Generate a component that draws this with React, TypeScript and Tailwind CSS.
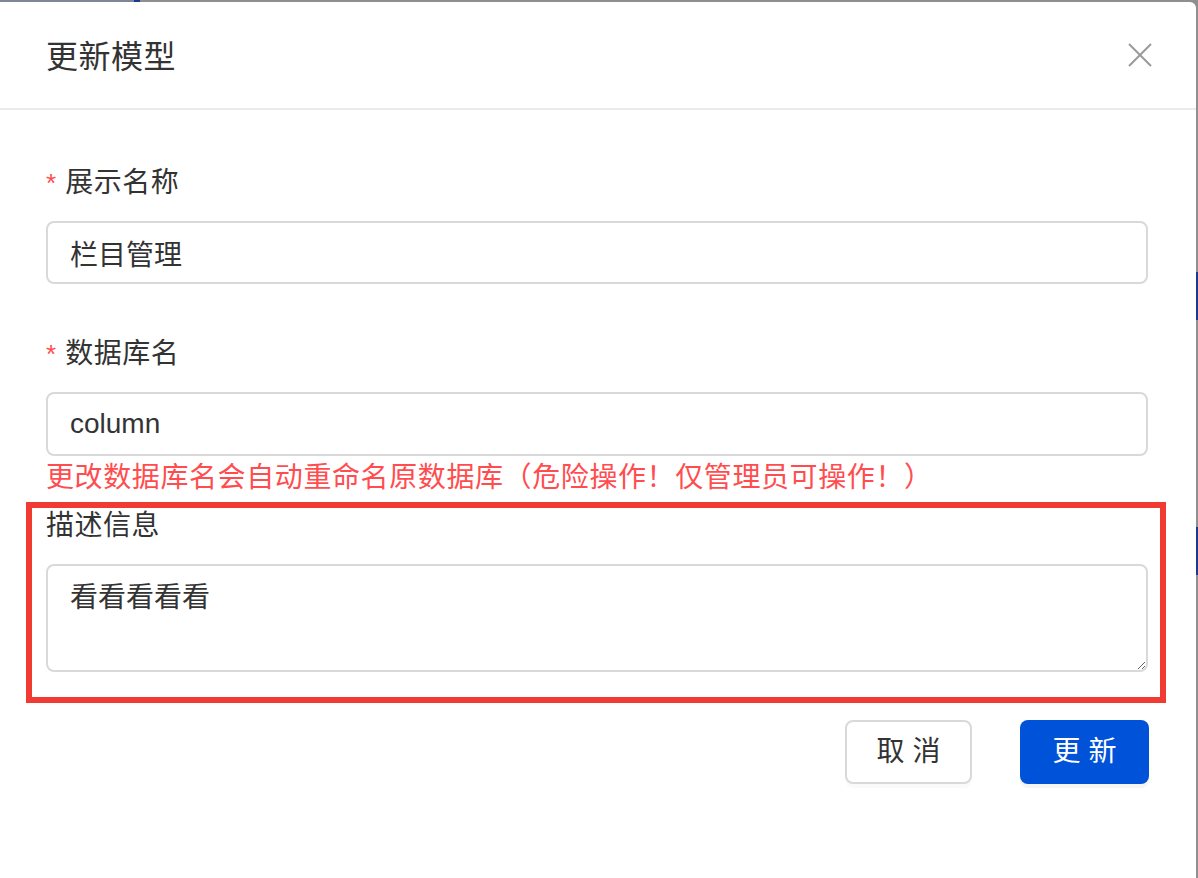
import { useState } from "react";

const font = {
  fontFamily: '"Liberation Sans", "Noto Sans CJK SC", sans-serif',
};

function Label({ text, required }: { text: string; required?: boolean }) {
  return (
    <div className="flex items-center h-[44px] mb-[16px] text-[28px] text-[#333]">
      {required && (
        <span className="text-[#ff4d4f] text-[26px] mr-[9px] leading-none">*</span>
      )}
      <span className="tracking-[0.5px]">{text}</span>
    </div>
  );
}

export default function App() {
  const [name, setName] = useState("栏目管理");
  const [table, setTable] = useState("column");
  const [desc, setDesc] = useState("看看看看看");

  return (
    <div
      className="w-[1198px] h-[878px] bg-[#8c8c8c] flex flex-col overflow-hidden"
      style={font}
    >
      {/* backdrop strip above the dialog */}
      <div className="flex h-[2px] shrink-0">
        <div className="w-[134px] bg-[#7d8797]" />
        <div className="w-[6px] bg-[#1b3a8c]" />
        <div className="flex-1 bg-[#8f8f8f]" />
      </div>

      <div className="flex flex-1 min-h-0">
        <div className="relative w-[1196px] bg-white rounded-tr-[6px] flex flex-col">
          {/* header */}
          <div className="h-[108px] shrink-0 flex items-center justify-between pl-[46px] pr-[44px] border-b-2 border-[#ebebeb]">
            <div className="text-[32px] text-[#333] leading-[44px] mt-[3px] tracking-[0.5px]">更新模型</div>
            <button className="w-[24px] h-[24px] text-[#999]">
              <svg viewBox="0 0 24 24" width="24" height="24" fill="none" stroke="currentColor" strokeWidth="2">
                <line x1="1" y1="1" x2="23" y2="23" />
                <line x1="23" y1="1" x2="1" y2="23" />
              </svg>
            </button>
          </div>

          {/* body */}
          <div className="pt-[51px] px-[46px] pr-[48px] flex flex-col">
            <Label text="展示名称" required />
            <input
              value={name}
              onChange={(e) => setName(e.target.value)}
              className="h-[63px] border-2 border-[#d9d9d9] rounded-[8px] px-[22px] text-[28px] text-[#333] outline-none"
            />

            <div className="h-[48px]" />
            <Label text="数据库名" required />
            <input
              value={table}
              onChange={(e) => setTable(e.target.value)}
              className="h-[64px] border-2 border-[#d9d9d9] rounded-[8px] px-[22px] text-[28px] text-[#333] outline-none"
            />
            <div className="h-[44px] flex items-center text-[28px] text-[#ff4d4f] tracking-[0.6px]">
              更改数据库名会自动重命名原数据库（危险操作！仅管理员可操作！）
            </div>

            <div className="h-[4px]" />
            <Label text="描述信息" />
            <textarea
              value={desc}
              onChange={(e) => setDesc(e.target.value)}
              className="h-[108px] border-2 border-[#d9d9d9] rounded-[8px] px-[22px] py-[12px] text-[28px] leading-[40px] text-[#333] outline-none resize-y"
            />

            <div className="flex justify-end gap-[48px] mt-[48px]">
              <button className="w-[127px] h-[64px] border-2 border-[#d9d9d9] rounded-[8px] bg-white text-[28px] text-[#333] shadow-[0_4px_0_rgba(0,0,0,0.02)]">
                取 消
              </button>
              <button className="w-[129px] h-[64px] rounded-[8px] bg-[#0052d9] text-[28px] text-white shadow-[0_4px_0_rgba(0,0,0,0.04)] -mr-[1px]">
                更 新
              </button>
            </div>
          </div>

          {/* annotation highlight around the description field */}
          <div className="absolute left-[26px] top-[500px] w-[1140px] h-[201px] border-[6px] border-[#f03a32] pointer-events-none" />
        </div>

        {/* backdrop strip right of the dialog */}
        <div className="w-[2px] flex flex-col bg-[#8f8f8f]">
          <div className="h-[270px]" />
          <div className="h-[48px] bg-[#1b3a8c]" />
          <div className="h-[207px]" />
          <div className="h-[48px] bg-[#1b3a8c]" />
        </div>
      </div>
    </div>
  );
}
